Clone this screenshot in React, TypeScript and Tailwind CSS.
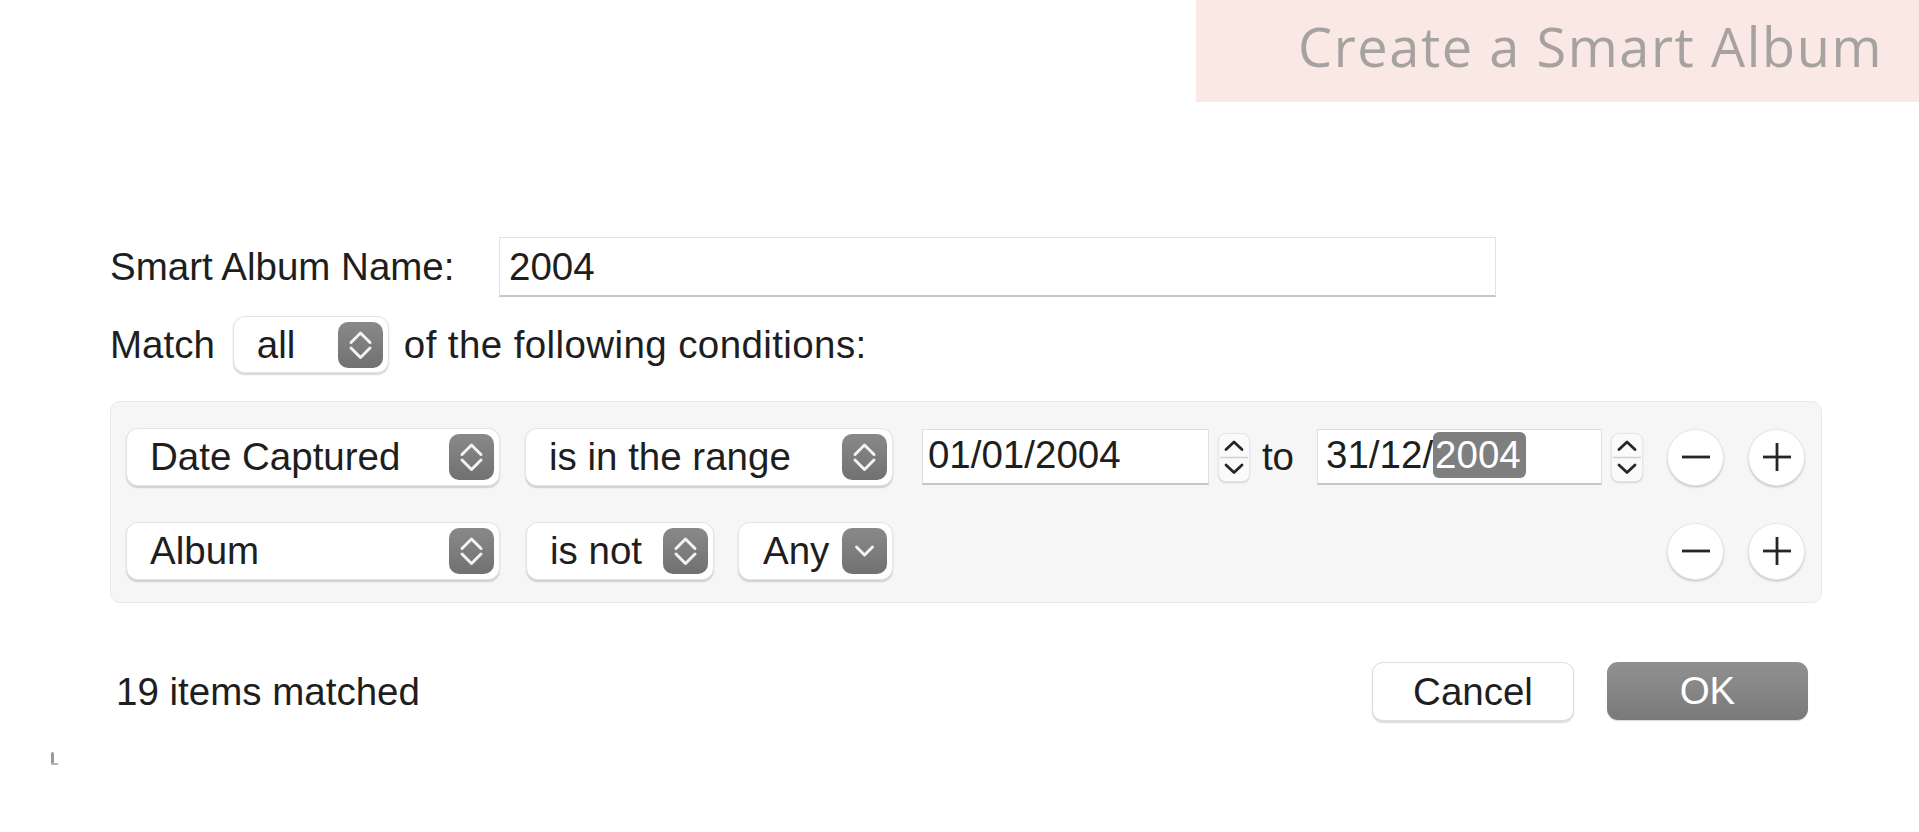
import React from 'react';

const UpDownIcon = () => (
  <span className="flex h-[46px] w-[45px] shrink-0 items-center justify-center rounded-[10px] bg-linear-to-b from-[#898989] to-[#717171]">
    <svg width="45" height="46" viewBox="0 0 45 46" fill="none">
      <path d="M13 20.5 L22.5 11 L32 20.5" stroke="#f2f2f2" strokeWidth="3" strokeLinecap="round" strokeLinejoin="round" />
      <path d="M13 26 L22.5 35.5 L32 26" stroke="#f2f2f2" strokeWidth="3" strokeLinecap="round" strokeLinejoin="round" />
    </svg>
  </span>
);

const DownIcon = () => (
  <span className="flex h-[46px] w-[45px] shrink-0 items-center justify-center rounded-[10px] bg-linear-to-b from-[#898989] to-[#717171]">
    <svg width="45" height="46" viewBox="0 0 45 46" fill="none">
      <path d="M14.5 19 L22.5 27 L30.5 19" stroke="#f2f2f2" strokeWidth="3" strokeLinecap="round" strokeLinejoin="round" />
    </svg>
  </span>
);

const Popup = ({ label, className, single }: { label: string; className: string; single?: boolean }) => (
  <div
    className={`flex items-center justify-between rounded-[12px] border border-[#e4e4e4] bg-white pl-[23px] pr-[5px] shadow-[0_1.5px_1.5px_rgba(0,0,0,0.16)] ${className}`}
  >
    <span className="whitespace-nowrap">{label}</span>
    {single ? <DownIcon /> : <UpDownIcon />}
  </div>
);

const DateStepper = () => (
  <div className="flex h-[49px] w-[32px] shrink-0 flex-col rounded-[8px] border border-[#e6e6e6] bg-[#fafafa] shadow-[0_1px_1.5px_rgba(0,0,0,0.15)]">
    <svg width="30" height="47" viewBox="0 0 30 47" fill="none">
      <path d="M7 15.5 L15 8 L23 15.5" stroke="#262626" strokeWidth="2.8" strokeLinecap="round" strokeLinejoin="round" />
      <line x1="1" y1="23.5" x2="29" y2="23.5" stroke="#d2d2d2" strokeWidth="1.5" />
      <path d="M7 31 L15 38.5 L23 31" stroke="#262626" strokeWidth="2.8" strokeLinecap="round" strokeLinejoin="round" />
    </svg>
  </div>
);

const CircleButton = ({ plus }: { plus?: boolean }) => (
  <button className="flex h-[57px] w-[57px] shrink-0 items-center justify-center rounded-full border border-[#e6e6e6] bg-white shadow-[0_1.5px_2px_rgba(0,0,0,0.18)]">
    <svg width="30" height="30" viewBox="0 0 30 30" fill="none">
      <line x1="1" y1="15" x2="29" y2="15" stroke="#262626" strokeWidth="2.8" />
      {plus && <line x1="15" y1="1" x2="15" y2="29" stroke="#262626" strokeWidth="2.8" />}
    </svg>
  </button>
);

export default function App() {
  return (
    <div className="relative h-[832px] w-full overflow-hidden bg-white font-['Liberation_Sans',Arial,sans-serif] text-[38.5px] text-[#1e1e1e]">
      <div className="flex justify-end">
        <div className="flex h-[102px] w-[723px] justify-end bg-[#f9e8e3] pr-[36px] pt-[19px]">
          <h1 className="font-['Open_Sans',sans-serif] text-[54px] font-normal leading-none tracking-[1.6px] text-[#a6a2a0]">
            Create a Smart Album
          </h1>
        </div>
      </div>

      <span className="absolute left-[51px] top-[752px] h-[12px] w-[3px] rounded-sm bg-[#9a9a9a]" />
      <span className="absolute left-[51px] top-[763px] h-[2px] w-[7px] bg-[#b5b5b5]" />

      <div className="w-[1822px] pl-[110px] pt-[135px]">
        <div className="flex h-[60px] items-center">
          <label className="w-[389px] shrink-0">Smart Album Name:</label>
          <div className="flex h-[60px] w-[997px] items-center border border-[#e3e3e3] border-b-2 border-b-[#c6c6c6] bg-white pl-[9px]">
            2004
          </div>
        </div>

        <div className="mt-[19px] flex h-[57px] items-center">
          <span>Match</span>
          <Popup label="all" className="ml-[18px] h-[57px] w-[156px]" />
          <span className="ml-[15px] tracking-[0.4px]">of the following conditions:</span>
        </div>

        <div className="mt-[28px] flex h-[202px] flex-col gap-[36px] rounded-[10px] border border-[#e9e9e9] bg-[#f6f6f6] pl-[15px] pr-[16px] pt-[26px]">
          <div className="flex h-[58px] items-center">
            <Popup label="Date Captured" className="h-[58px] w-[374px]" />
            <Popup label="is in the range" className="ml-[25px] h-[58px] w-[368px]" />
            <div className="ml-[29px] flex h-[56px] w-[287px] items-center border border-[#e0e0e0] border-b-2 border-b-[#c6c6c6] bg-white pb-[3px] pl-[5px]">
              01/01/2004
            </div>
            <div className="ml-[9px]">
              <DateStepper />
            </div>
            <span className="ml-[12px]">to</span>
            <div className="ml-[23px] flex h-[56px] w-[285px] items-center border border-[#e0e0e0] border-b-2 border-b-[#c6c6c6] bg-white pb-[3px] pl-[8px]">
              <span>31/12/</span>
              <span className="rounded-[6px] bg-[#7f7f7f] pl-[2px] pr-[5px] leading-[46px] text-white">2004</span>
            </div>
            <div className="ml-[9px]">
              <DateStepper />
            </div>
            <div className="ml-[24px] flex gap-[24px]">
              <CircleButton />
              <CircleButton plus />
            </div>
          </div>

          <div className="flex h-[58px] items-center">
            <Popup label="Album" className="h-[58px] w-[374px]" />
            <Popup label="is not" className="ml-[26px] h-[58px] w-[188px]" />
            <Popup label="Any" single className="ml-[24px] h-[58px] w-[155px] pl-[24px]" />
            <div className="ml-auto flex gap-[24px]">
              <CircleButton />
              <CircleButton plus />
            </div>
          </div>
        </div>

        <div className="mt-[59px] flex h-[59px] items-center pl-[6px] pr-[14px]">
          <span>19 items matched</span>
          <div className="ml-auto flex gap-[33px]">
            <button className="h-[59px] w-[202px] rounded-[11px] border border-[#dedede] bg-white shadow-[0_1.5px_1.5px_rgba(0,0,0,0.14)]">
              Cancel
            </button>
            <button className="h-[58px] w-[201px] rounded-[11px] bg-linear-to-b from-[#909090] to-[#7a7a7a] text-white shadow-[0_1px_1px_rgba(0,0,0,0.15)]">
              OK
            </button>
          </div>
        </div>
      </div>
    </div>
  );
}
